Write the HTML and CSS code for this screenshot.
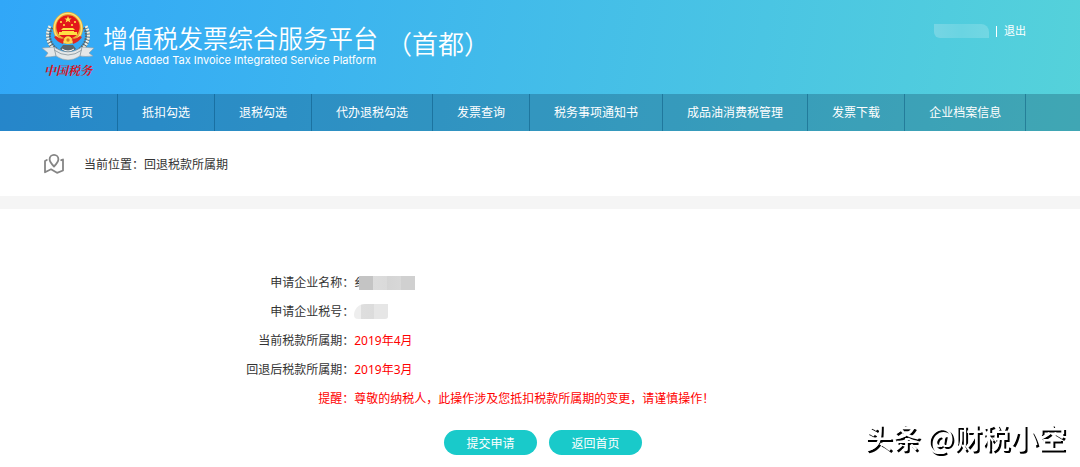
FILE: index.html
```html
<!DOCTYPE html>
<html lang="zh-CN">

<head>
    <meta charset="UTF-8">
    <meta name="viewport" content="width=device-width, initial-scale=1.0">
    <title>增值税发票综合服务平台</title>
    <link rel="stylesheet" href="styles.css">
</head>

<body>
    <div class="top">
        <header class="header">
            <div class="logo">
                <svg class="emblem" width="52" height="52" viewBox="0 0 52 52">
                    <!--wheat-->
                    <g fill="none" stroke="#56646c" stroke-width="5" stroke-dasharray="2 1">
                        <path d="M9 16C3 26 8 38 22 44" />
                        <path d="M43 16C49 26 44 38 30 44" />
                    </g>
                    <g fill="none" stroke="#f1f1e6" stroke-width="3" stroke-dasharray="2 1">
                        <path d="M8 15C2 26 7 38 21 44" />
                        <path d="M44 15C50 26 45 38 31 44" />
                    </g>
                    <!--ribbon-->
                    <path d="M0 37L12 36Q26 46 40 36L52 37L47 42L51 45Q43 46 38 45Q26 53 14 45Q9 46 3 46L6 42Z" fill="#e4e7e8" stroke="#8d9ca6" stroke-width=".6" />
                    <path d="M12 36L14 45M40 36L38 45M12 39Q26 49 40 39" fill="none" stroke="#98a4aa" />
                    <path d="M18 38Q26 44 34 38L31 34H21Z" fill="#59656b" />
                    <path d="M20 38Q26 42 32 38" fill="none" stroke="#fff" />
                    <!--national emblem-->
                    <ellipse cx="26" cy="17" rx="15" ry="16" fill="#e9ae35" />
                    <ellipse cx="26" cy="17" rx="13.6" ry="14.6" fill="none" stroke="#ffe27a" stroke-width="1.4" />
                    <circle cx="26" cy="16" r="11.7" fill="#e3171b" />
                    <path d="M26 5l1 2.4h2.6l-2 1.6.8 2.5-2.4-1.5-2.4 1.5.8-2.5-2-1.6H25z" fill="#ffe34d" />
                    <g fill="#ffdf45">
                        <circle cx="19" cy="11" r="1.1" />
                        <circle cx="33" cy="11" r="1.1" />
                        <circle cx="22" cy="14" r="1.1" />
                        <circle cx="30" cy="14" r="1.1" />
                        <path d="M21 17H31L33 19H19ZM20 20H32V21H35V24H17V21H20Z" />
                    </g>
                    <path d="M14 25Q19 29 22 27L21 33Q15 31 12 26ZM38 25Q33 29 30 27L31 33Q37 31 40 26Z" fill="#df2720" />
                    <circle cx="26" cy="29" r="3.8" fill="#ffd84a" />
                    <circle cx="26" cy="29" r="1.7" fill="#d77b22" />
                </svg>
                <span class="logo-text">中国税务</span>
            </div>
            <div class="title">
                <h1>增值税发票综合服务平台</h1>
                <p>Value Added Tax Invoice Integrated Service Platform</p>
            </div>
            <span class="area">（首都）</span>
            <div class="user">
                <span class="user-name"></span>
                <span class="line"></span>
                <a href="#">退出</a>
            </div>
        </header>
        <nav class="menu">
            <ul>
                <li><a href="#">首页</a></li>
                <li><a href="#">抵扣勾选</a></li>
                <li><a href="#">退税勾选</a></li>
                <li><a href="#">代办退税勾选</a></li>
                <li><a href="#">发票查询</a></li>
                <li><a href="#">税务事项通知书</a></li>
                <li><a href="#">成品油消费税管理</a></li>
                <li><a href="#">发票下载</a></li>
                <li><a href="#">企业档案信息</a></li>
            </ul>
        </nav>
    </div>

    <div class="location">
        <svg width="20" height="20" viewBox="0 0 20 20" fill="none" stroke="#858585" stroke-width="1.8" stroke-linejoin="round" stroke-linecap="round">
            <path d="M10 12.500C7 9.500 5.600 7.500 5.600 5.300a4.400 4.400 0 0 1 8.800 0C14.400 7.500 13 9.500 10 12.500Z" />
            <path d="M2.800 6L1 7V18.300L7 15.300L13 18.800L19 16.500V5.500L17.200 6.200" />
        </svg>
        <span>当前位置：回退税款所属期</span>
    </div>

    <main class="content">
        <dl class="info">
            <dt>申请企业名称：</dt>
            <dd><span>纟</span><span class="mask-name"></span></dd>
            <dt>申请企业税号：</dt>
            <dd><span class="mask-number"></span></dd>
            <dt>当前税款所属期：</dt>
            <dd class="red">2019年4月</dd>
            <dt>回退后税款所属期：</dt>
            <dd class="red">2019年3月</dd>
            <dt class="red">提醒：</dt>
            <dd class="red">尊敬的纳税人，此操作涉及您抵扣税款所属期的变更，请谨慎操作！</dd>
        </dl>
        <div class="btns">
            <button type="button">提交申请</button>
            <button type="button">返回首页</button>
        </div>
    </main>

    <div class="watermark">头条 @财税小空</div>
</body>

</html>
```
FILE: styles.css
```css
* {
    box-sizing: border-box;
}

body {
    margin: 0;
    font-family: "Noto Sans", "Noto Sans CJK SC", sans-serif;
    font-size: 12px;
    color: #333;
    background-color: #fff;
}

h1,
p,
ul,
dl,
dd {
    margin: 0;
    padding: 0;
}

a {
    color: #fff;
    text-decoration: none;
}

/*header*/
.top {
    background-image: linear-gradient(100deg, #31a7f8, #55d2da);
}

.header {
    display: flex;
    align-items: flex-start;
    height: 94px;
    padding: 11px 54px 0 42px;
    color: #fff;
}

.logo {
    display: flex;
    flex-direction: column;
    align-items: center;
    width: 52px;
}

.logo-text {
    font-family: "Noto Serif CJK SC", "Noto Sans CJK SC", serif;
    font-size: 12px;
    font-style: italic;
    font-weight: bold;
    line-height: 14px;
    color: #d8131c;
    white-space: nowrap;
}

.title {
    margin-left: 9px;
    padding-top: 10px;
}

.title h1 {
    font-family: "Noto Sans CJK SC", sans-serif;
    font-size: 25px;
    font-weight: 350;
    line-height: 32px;
}

.title p {
    font-family: Inter, sans-serif;
    font-size: 11px;
    line-height: 14px;
}

.area {
    margin-left: 8px;
    padding-top: 16px;
    font-family: "Noto Sans CJK SC", sans-serif;
    font-size: 26px;
    font-weight: 350;
    line-height: 32px;
}

.user {
    display: flex;
    align-items: center;
    gap: 7px;
    margin-left: auto;
    padding-top: 11px;
    font-size: 11px;
    line-height: 18px;
}

.user-name {
    width: 55px;
    height: 14px;
    background-image: linear-gradient(to right, #76d5e4, #6ad4e2 50%, #72d7e3);
    border-radius: 0 8px 0 6px;
}

.line {
    width: 1px;
    height: 11px;
    background-color: #fff;
}

/*menu*/
.menu {
    background-color: rgba(0, 30, 60, .24);
}

.menu ul {
    display: flex;
    padding-left: 45px;
    list-style: none;
}

.menu li {
    border-right: 1px solid rgba(0, 70, 110, .4);
}

.menu a {
    display: block;
    padding: 0 24px;
    line-height: 37px;
    white-space: nowrap;
}

/*location*/
.location {
    display: flex;
    align-items: center;
    gap: 20px;
    height: 78px;
    padding: 0 44px;
    border-bottom: 13px solid #f5f5f5;
}

/*content*/
.content {
    padding-top: 59px;
}

.info {
    display: grid;
    grid-template-columns: 32.8% 1fr;
    line-height: 29px;
}

.info dt {
    text-align: right;
}

.info dd {
    display: flex;
    align-items: center;
}

.info .red {
    color: #f00;
}

/*covers the company name after its first strokes*/
.mask-name {
    width: 56px;
    height: 14px;
    margin-left: -7px;
    background-image: linear-gradient(to right, #c4c4c4 14px, #dcdcdc 14px, #dadada 28px, #d4d4d4 28px, #d8d8d8 42px, #d0d0d0 42px);
}

.mask-number {
    width: 34px;
    height: 15px;
    background-image: linear-gradient(to right, #eee 7px, #dedede 7px, #dcdcdc 20px, #e6e6e6 20px);
    border-radius: 16px 0 4px 6px;
}

.btns {
    display: flex;
    justify-content: center;
    gap: 12px;
    padding: 17px 0 12px 6px;
}

.btns button {
    width: 93px;
    height: 25px;
    padding: 0;
    border: 0;
    border-radius: 13px;
    font-family: inherit;
    font-size: 12px;
    color: #fff;
    background-color: #19caca;
    cursor: pointer;
}

.watermark {
    position: fixed;
    right: 14px;
    bottom: 12px;
    font-family: "Noto Sans CJK SC", sans-serif;
    font-size: 28px;
    font-weight: 500;
    line-height: 36px;
    color: #fff;
    text-shadow: 2px 2px 0 #000;
}
```
